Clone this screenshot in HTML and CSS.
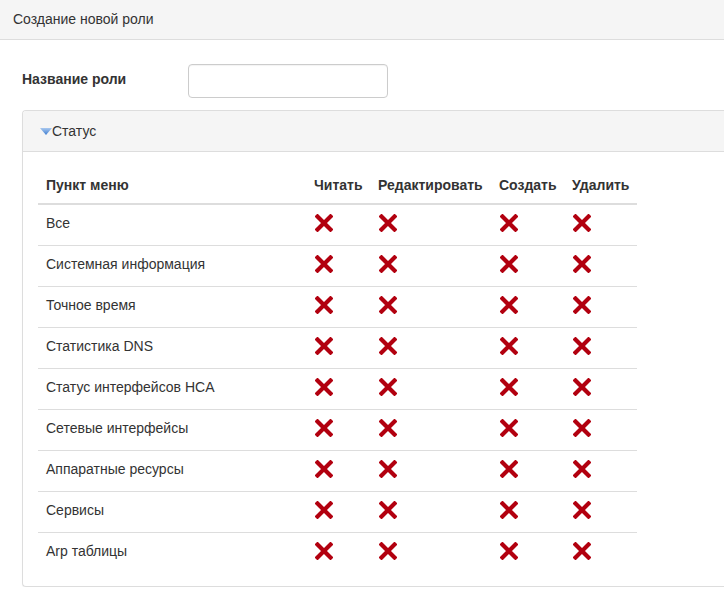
FILE: index.html
```html
<!DOCTYPE html>
<html lang="ru">
<head>
<meta charset="utf-8">
<title>Создание новой роли</title>
<link rel="stylesheet" href="styles.css">
</head>
<body>
<div class="topbar">Создание новой роли</div>
<div class="content">
  <div class="form-row">
    <label class="form-label" for="role">Название роли</label>
    <input class="form-input" id="role" type="text">
  </div>
  <div class="panel">
    <div class="panel-heading">
      <svg class="caret" width="12" height="7" viewBox="0 0 12 7"><defs><linearGradient id="cg" x1="0" y1="0" x2="0" y2="1"><stop offset="0" stop-color="#a9c8ef"/><stop offset="1" stop-color="#3c7cd0"/></linearGradient></defs><polygon points="0,0 12,0 6,7" fill="url(#cg)"/></svg><span>Статус</span>
    </div>
    <div class="panel-body">
      <table class="perm-table">
        <thead>
          <tr><th class="c-name">Пункт меню</th><th class="c-read">Читать</th><th class="c-edit">Редактировать</th><th class="c-create">Создать</th><th class="c-del">Удалить</th></tr>
        </thead>
        <tbody id="rows"></tbody>
      </table>
    </div>
  </div>
</div>
<script>
var items = ["Все","Системная информация","Точное время","Статистика DNS","Статус интерфейсов HCA","Сетевые интерфейсы","Аппаратные ресурсы","Сервисы","Arp таблицы"];
var x = '<svg class="xicon" width="18" height="18" viewBox="0 0 18 18"><path d="M2.5 2.5 L15.5 15.5 M15.5 2.5 L2.5 15.5" stroke="#b2000f" stroke-width="4.2" stroke-linecap="square"/></svg>';
var html = "";
items.forEach(function(n){ html += "<tr><td>"+n+"</td><td>"+x+"</td><td>"+x+"</td><td>"+x+"</td><td>"+x+"</td></tr>"; });
document.getElementById("rows").innerHTML = html;
</script>
</body>
</html>
```
FILE: styles.css
```css
html, body {
  margin: 0;
  padding: 0;
  overflow: hidden;
  background: #fff;
  font-family: "Liberation Sans", Arial, sans-serif;
  font-size: 14px;
  line-height: 20px;
  color: #333;
}
.topbar {
  box-sizing: border-box;
  padding: 9px 13px;
  background: #f5f5f5;
  border-bottom: 1px solid #ddd;
  height: 40px;
}
.content {
  padding: 24px 0 0 22px;
}
.form-row {
  display: flex;
  align-items: center;
  height: 34px;
}
.form-label {
  width: 166px;
  font-weight: bold;
  margin-top: -4px;
}
.form-input {
  width: 200px;
  height: 34px;
  box-sizing: border-box;
  border: 1px solid #ccc;
  border-radius: 4px;
  padding: 6px 12px;
  font: inherit;
  box-shadow: inset 0 1px 1px rgba(0,0,0,.05);
}
.panel {
  margin-top: 12px;
  border: 1px solid #ddd;
  border-right: 0;
  border-radius: 4px 0 0 4px;
  box-shadow: 0 1px 1px rgba(0,0,0,.05);
}
.panel-heading {
  background: #f5f5f5;
  border-bottom: 1px solid #ddd;
  padding: 10px 17px 10px;
  display: flex;
  align-items: center;
  border-radius: 3px 0 0 0;
}
.caret {
  margin-top: 1px;
}
.panel-body {
  padding: 15px 15px 13px;
}
.perm-table {
  border-collapse: collapse;
  table-layout: fixed;
  width: 599px;
}
.perm-table th {
  text-align: left;
  font-weight: bold;
  padding: 8px;
  border-bottom: 2px solid #ddd;
  white-space: nowrap;
}
.perm-table td {
  padding: 8px;
  height: 24px;
  border-top: 1px solid #ddd;
  vertical-align: top;
}
.perm-table tbody tr:first-child td {
  border-top: 0;
}
.c-name { width: 252px; }
.c-read { width: 48px; }
.c-edit { width: 105px; }
.c-create { width: 57px; }
.c-del { width: 57px; }
.xicon {
  display: block;
  margin: 1px 0 0 1px;
}
```
